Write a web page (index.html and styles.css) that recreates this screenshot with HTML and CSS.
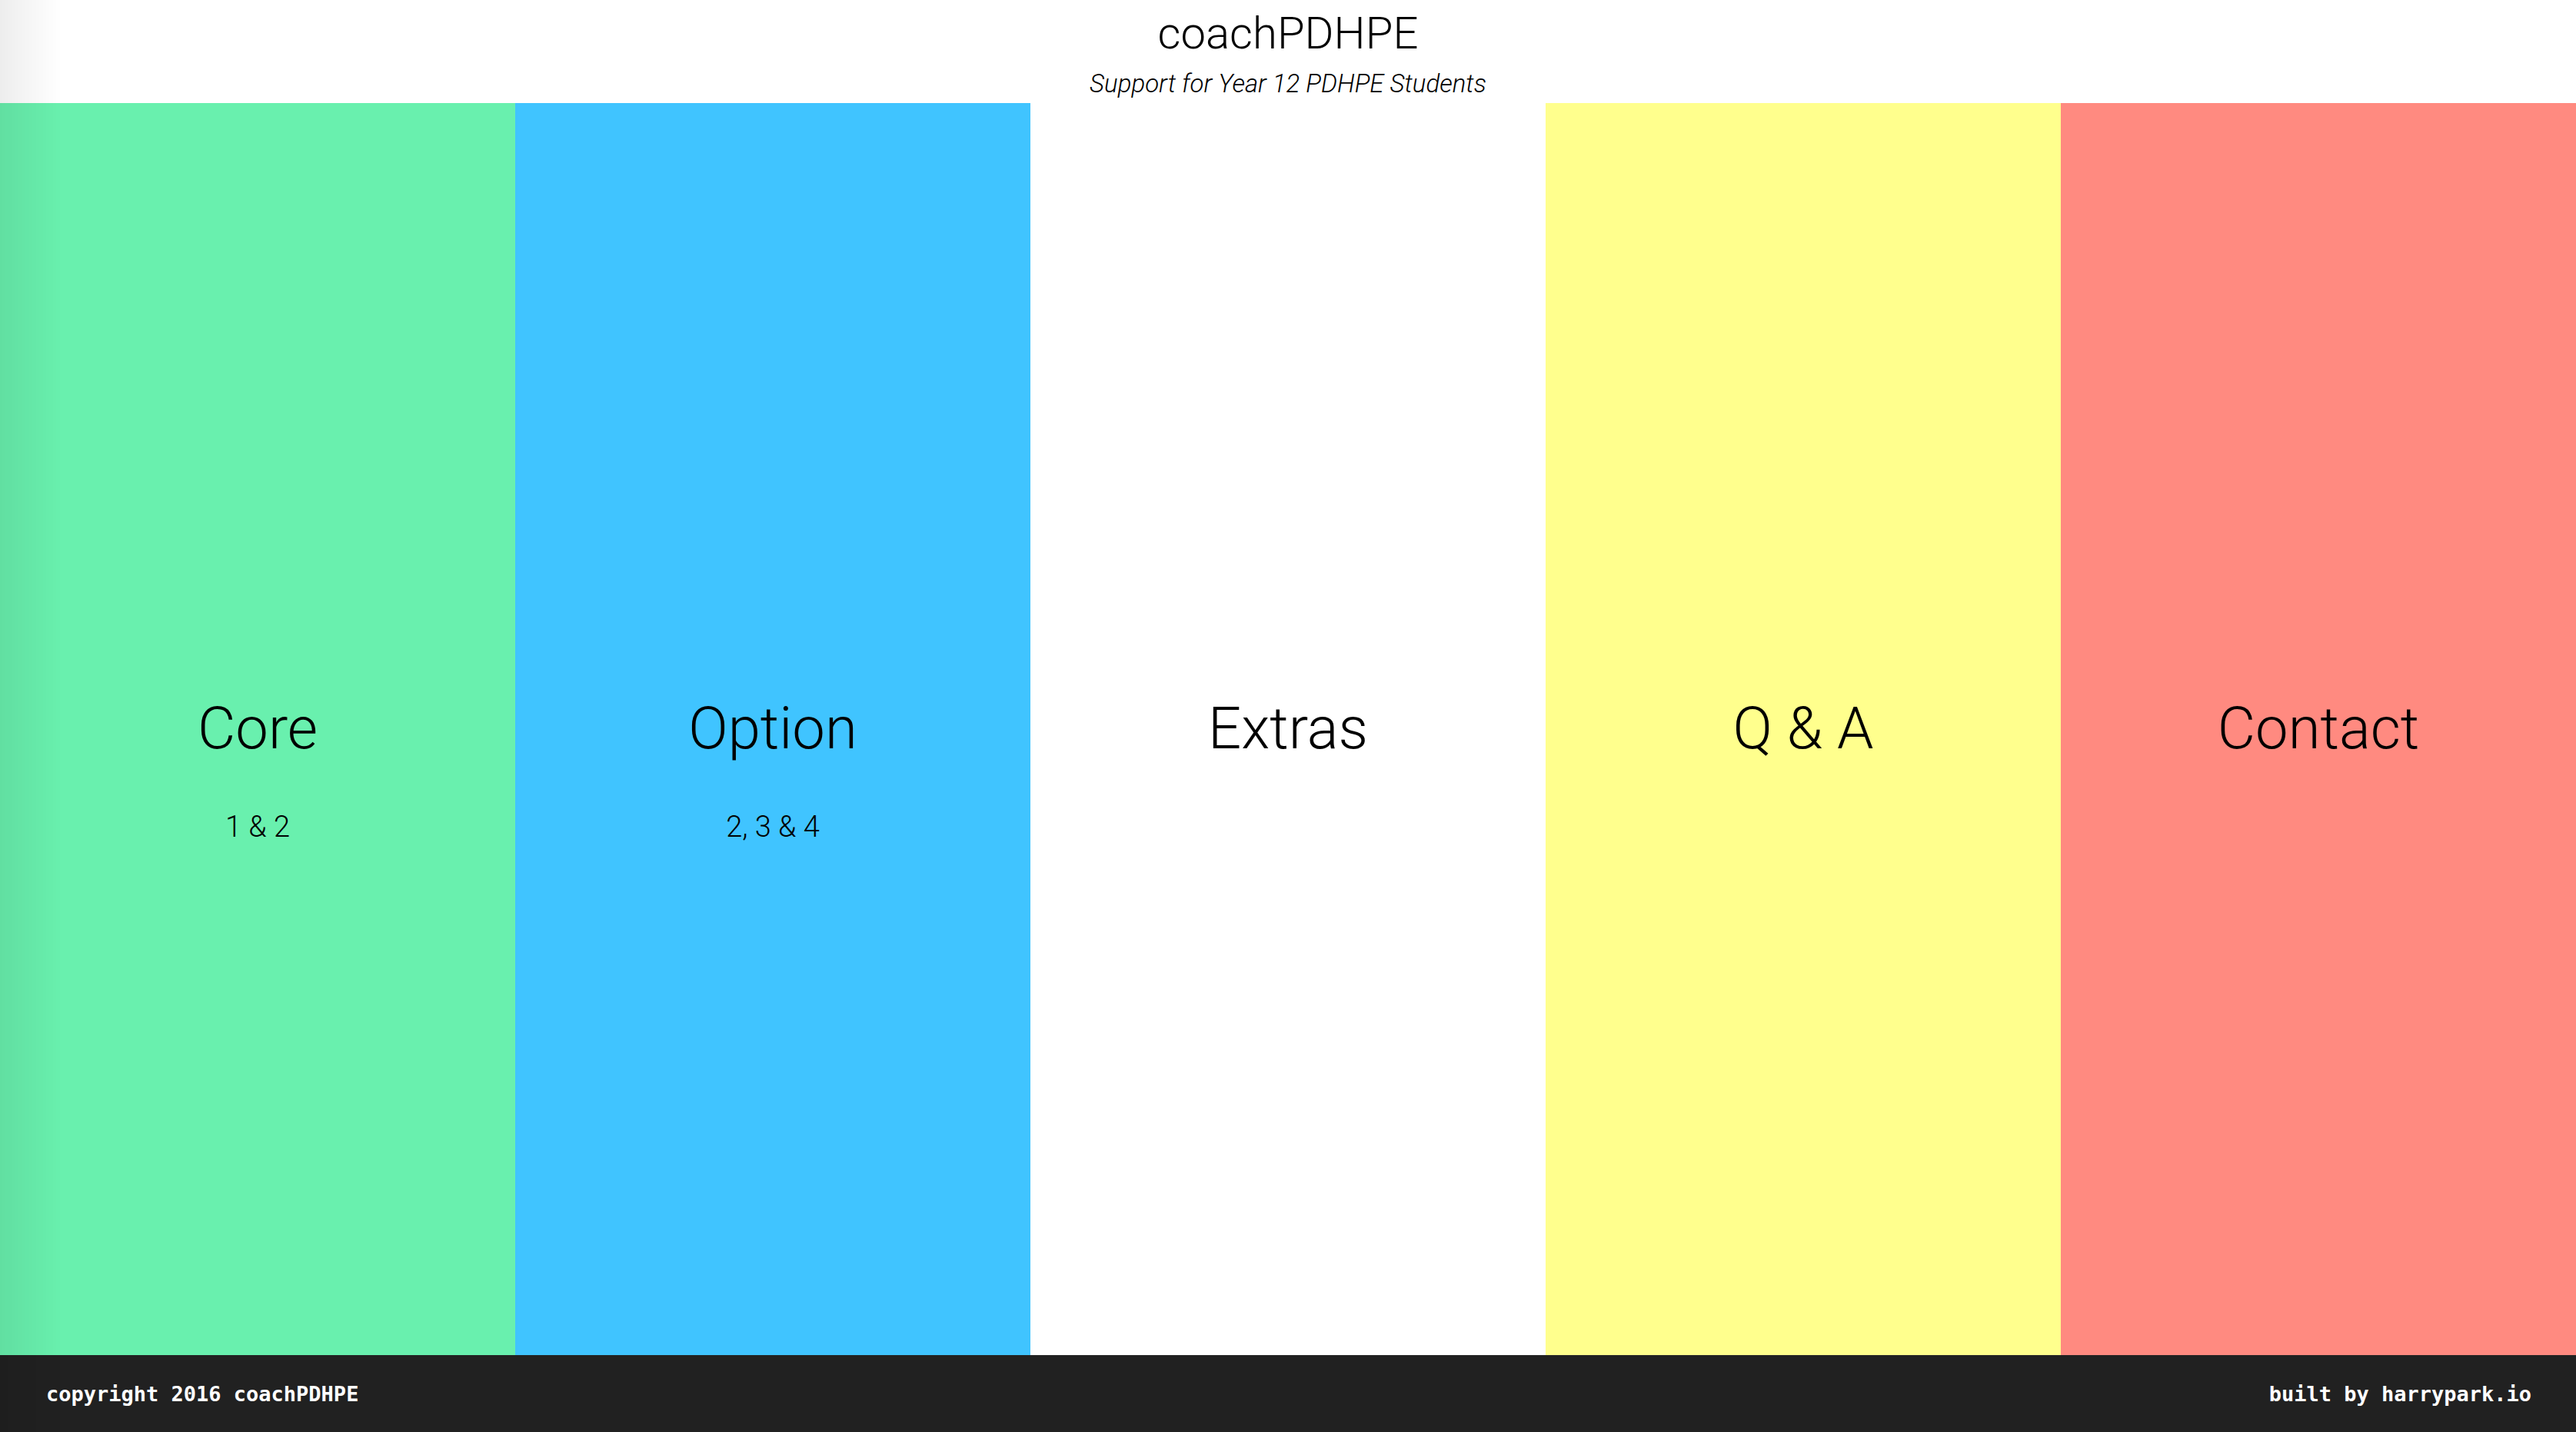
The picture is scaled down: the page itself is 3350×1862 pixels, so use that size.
FILE: index.html
```html
<!DOCTYPE html>
<html lang="en">
<head>
<meta charset="utf-8">
<title>coachPDHPE</title>
<link rel="stylesheet" href="styles.css">
</head>
<body>
<div class="page">
  <header class="header">
    <h1 class="brand">coachPDHPE</h1>
    <p class="tagline">Support for Year 12 PDHPE Students</p>
  </header>
  <main class="panels">
    <a class="panel panel-core" href="#"><span class="panel-title">Core</span><span class="panel-sub">1 &amp; 2</span></a>
    <a class="panel panel-option" href="#"><span class="panel-title">Option</span><span class="panel-sub">2, 3 &amp; 4</span></a>
    <a class="panel panel-extras" href="#"><span class="panel-title">Extras</span></a>
    <a class="panel panel-qa" href="#"><span class="panel-title">Q &amp; A</span></a>
    <a class="panel panel-contact" href="#"><span class="panel-title">Contact</span></a>
  </main>
  <footer class="footer">
    <span class="foot-text">copyright 2016 coachPDHPE</span>
    <span class="foot-text">built by harrypark.io</span>
  </footer>
</div>
</body>
</html>
```

FILE: styles.css
```css
html, body {
  margin: 0;
  padding: 0;
  height: 100%;
}
body {
  font-family: Roboto, "Noto Sans", sans-serif;
  font-weight: 300;
  color: #000;
  background: #fff;
  position: relative;
}
body::before {
  content: "";
  position: fixed;
  left: 0;
  top: 0;
  bottom: 0;
  width: 80px;
  background: linear-gradient(to right, rgba(0,0,0,0.07), rgba(0,0,0,0));
  pointer-events: none;
  z-index: 5;
}
.page {
  display: flex;
  flex-direction: column;
  height: 100vh;
}
.header {
  height: 134px;
  box-sizing: border-box;
  padding-top: 9px;
  display: flex;
  flex-direction: column;
  align-items: center;
  flex: none;
}
.brand {
  margin: 0;
  font-size: 58px;
  font-weight: 300;
  line-height: 1.2;
}
.tagline {
  margin: 10px 0 0;
  font-size: 33px;
  font-style: italic;
  font-weight: 300;
  line-height: 1.2;
}
.panels {
  flex: 1;
  display: grid;
  grid-template-columns: repeat(5, 1fr);
}
.panel {
  display: grid;
  grid-template-rows: 1fr auto 1fr;
  justify-items: center;
  color: #000;
  text-decoration: none;
}
.panel-title {
  grid-row: 2;
  font-size: 76px;
  line-height: 1.2;
}
.panel-sub {
  grid-row: 3;
  align-self: start;
  margin-top: 59px;
  font-size: 38px;
  line-height: 1.2;
}
.panel-core { background: #69f0ae; }
.panel-option { background: #40c4ff; }
.panel-extras { background: #ffffff; }
.panel-qa { background: #ffff8d; }
.panel-contact { background: #ff8a80; }
.footer {
  flex: none;
  height: 100px;
  background: #212121;
  color: #fff;
  display: flex;
  align-items: center;
  justify-content: space-between;
  padding: 0 58px 0 60px;
}
.foot-text {
  font-family: "DejaVu Sans Mono", "Liberation Mono", monospace;
  font-weight: bold;
  font-size: 27px;
}
```
